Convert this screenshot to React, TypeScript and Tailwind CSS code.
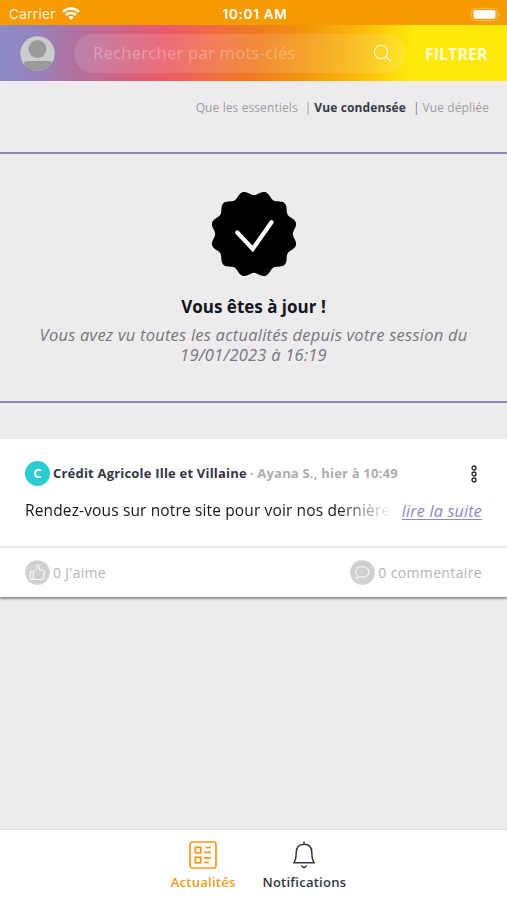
import React from "react";

const sealPath =
  Array.from({ length: 180 }, (_, i) => {
    const a = (i * 2 * Math.PI) / 180;
    const r = 41.1 - 2.3 * Math.cos(12 * a);
    return `${i ? "L" : "M"}${(44 + r * Math.cos(a)).toFixed(2)} ${(44 + r * Math.sin(a)).toFixed(2)}`;
  }).join("") + "Z";

function StatusBar() {
  return (
    <div className="grid h-[25px] grid-cols-3 items-center bg-[#f59a00] pt-[3px] pr-[6px] pl-[9px] font-['Inter',sans-serif] text-white">
      <div className="flex items-center gap-[6px]">
        <span className="text-[13.5px] tracking-[0.35px] text-[#fff3df]">Carrier</span>
        <svg width="18" height="14" viewBox="0 0 18 14" fill="none" stroke="#fff" strokeWidth="2.5">
          <path d="M1 4.8C5.5.5 12.5.5 17 4.8" />
          <path d="M4 8C6.8 5.3 11.2 5.3 14 8" />
          <path d="M6.3 10.2C8 8.7 10 8.7 11.7 10.2L9 13Z" fill="#fff" stroke="none" />
        </svg>
      </div>
      <span className="pt-px text-center text-[13.5px] font-semibold tracking-[0.7px] whitespace-nowrap">10:01 AM</span>
      <svg className="justify-self-end" width="30" height="15" viewBox="0 0 30 15">
        <rect x=".8" y="1.3" width="25.4" height="12.2" rx="3.5" fill="none" stroke="#f9bd5e" />
        <rect x="2.5" y="3" width="22" height="8.8" rx="2" fill="#fff" />
        <path d="M27.5 5.2c2 .8 2 3.6 0 4.4z" fill="#f9bd5e" />
      </svg>
    </div>
  );
}

function Header() {
  return (
    <header className="flex h-14 items-center bg-[linear-gradient(95deg,#8d8bc8_0px,#9484bf_32px,#b0719f_78px,#d06486_122px,#ec5a66_170px,#f06f40_218px,#f07a20_256px,#f3960f_306px,#f9b80a_357px,#ffe80a_412px,#ffe90a_510px)] pl-[20px]">
      <svg width="35" height="35" viewBox="0 0 35 35">
        <defs>
          <clipPath id="avatar">
            <circle cx="17.5" cy="17.5" r="17.3" />
          </clipPath>
        </defs>
        <g clipPath="url(#avatar)">
          <rect width="35" height="35" fill="#cbcccb" />
          <circle cx="17.5" cy="13" r="9" fill="#999b9b" />
          <path d="M4 35V28q0-3 3-3H29q3 0 3 3v7z" fill="#999b9b" />
        </g>
      </svg>
      <div className="ml-[19px] flex h-[39px] w-[332px] items-center justify-between rounded-full bg-white/12 pr-[14px] pl-[19px]">
        <span className="text-[16.5px] tracking-[0.3px] whitespace-nowrap text-white/30">Rechercher par mots-clés</span>
        <svg width="19" height="19" viewBox="0 0 19 19" fill="none" stroke="#fff3c8" strokeWidth="1.3" strokeLinecap="round">
          <circle cx="8" cy="8" r="6.6" />
          <path d="M12.8 12.8L17.5 17.2" />
        </svg>
      </div>
      <span className="ml-[19px] pt-px text-[16px] font-bold text-[#fffbd8]">FILTRER</span>
    </header>
  );
}

function Seal() {
  return (
    <svg width="88" height="88" viewBox="0 0 88 88">
      <path d={sealPath} fill="#000" />
      <path d="M27.3 42.5L42.7 59L61.5 32.3" fill="none" stroke="#fff" strokeWidth="4.2" strokeLinecap="round" />
    </svg>
  );
}

function PostCard() {
  return (
    <article className="mt-9 h-[158px] bg-white shadow-[0_2px_2px_#8d8d90]">
      <div className="flex h-[107px] flex-col px-[25px] pt-[22px]">
        <div className="flex h-[25px] items-center text-[13px] font-bold whitespace-nowrap">
          <span className="flex size-[25px] items-center justify-center rounded-full bg-[#2bcbd4] text-[13px] text-white">C</span>
          <span className="ml-[3px] tracking-[0.2px] text-[#343545]">Crédit Agricole Ille et Villaine</span>
          <span className="ml-[3px] tracking-[0.2px] text-[#adadb0]">· Ayana S., hier à 10:49</span>
          <svg className="mr-[4px] ml-auto" width="8" height="20" viewBox="0 0 8 20" fill="none" stroke="#222" strokeWidth="1.3">
            <circle cx="4" cy="4" r="2" />
            <circle cx="4" cy="10" r="2" />
            <circle cx="4" cy="16" r="2" />
          </svg>
        </div>
        <div className="mt-[13px] flex h-6 items-center text-[15.5px] whitespace-nowrap">
          <span className="bg-[linear-gradient(90deg,#171719_312px,#ffffff_366px)] bg-clip-text tracking-[0.14px] text-transparent">
            Rendez-vous sur notre site pour voir nos dernière
          </span>
          <a className="ml-auto text-[16px] tracking-[0.24px] text-[#9287c8] italic underline underline-offset-2">lire la suite</a>
        </div>
      </div>
      <div className="flex h-[51px] items-center justify-between border-t-2 border-[#e7e7e8] px-[25px] text-[14px] text-[#b5b5b7]">
        <div className="flex items-center gap-[3px]">
          <svg width="25" height="25" viewBox="0 0 25 25" fill="none" stroke="#fff" strokeWidth="1" strokeLinejoin="round">
            <circle cx="12.5" cy="12.5" r="12.3" fill="#d0d0d1" stroke="none" />
            <path d="M5.3 11.5h3v8h-3zM8.300 12L12 8.300V5.500q0-1 1.300-1 2 1 1.200 5.500H18q1.800.2 1.500 2l-1.200 6q-.4 1.500-2 1.500H11q-1.500 0-2.700-1" />
          </svg>
          <span className="tracking-[0.3px]">0 J'aime</span>
        </div>
        <div className="flex items-center gap-[3px]">
          <svg width="25" height="25" viewBox="0 0 25 25" fill="none" stroke="#fff" strokeWidth="1" strokeLinejoin="round">
            <circle cx="12.5" cy="12.5" r="12.3" fill="#d0d0d1" stroke="none" />
            <path d="M8 16C5 14 4.500 10 8 7.800c4-2.400 10-.8 10.800 3.500.6 4-4.300 6.700-9 5.500L6.500 18.500z" />
          </svg>
          <span className="tracking-[0.36px]">0 commentaire</span>
        </div>
      </div>
    </article>
  );
}

function TabBar() {
  return (
    <nav className="flex h-[71px] justify-center gap-[27px] border-t border-[#dedee0] bg-white pl-[10px] text-[13px] font-semibold tracking-[0.25px]">
      <div className="flex flex-col items-center pt-[10px] text-[#f39a18]">
        <svg width="30" height="30" viewBox="0 0 30 30" fill="none" stroke="currentColor" strokeWidth="1.7">
          <rect x="2" y="2" width="26" height="26" rx="2.5" />
          <rect x="7.3" y="7.3" width="5.5" height="5.5" />
          <rect x="7.3" y="17.3" width="5.5" height="5.5" />
          <path d="M17.5 7.5H23M16 12.3h7M16 17.8h7M16 22.5h5" />
        </svg>
        <span className="mt-[2px] leading-[20px]">Actualités</span>
      </div>
      <div className="flex flex-col items-center pt-[10px] text-[#343641]">
        <svg width="30" height="30" viewBox="0 0 30 30" fill="none" stroke="currentColor" strokeWidth="1.5" strokeLinejoin="round" strokeLinecap="round">
          <path d="M15 2V4M15 4.200c5.200 0 7.800 3.500 7.800 8.300 0 5 .5 7.500 2.400 10.300H4.800c1.900-2.800 2.400-5.300 2.400-10.300C7.200 7.700 9.800 4.200 15 4.200Z" />
          <path d="M12.800 26q2.200 2.800 4.400 0" />
        </svg>
        <span className="mt-[2px] leading-[20px]">Notifications</span>
      </div>
    </nav>
  );
}

export default function App() {
  return (
    <div className="flex h-[900px] w-[507px] flex-col overflow-hidden bg-[#edebee] font-['Open_Sans',sans-serif]">
      <StatusBar />
      <Header />
      <div className="flex h-[71px] justify-end pt-[17px] pr-[18px] text-[12px] leading-[20px] whitespace-nowrap text-[#9e9ea2]">
        <span className="tracking-[0.1px]">Que les essentiels</span>
        <span className="ml-[7px]">|</span>
        <span className="ml-[3px] font-bold tracking-[0.12px] text-[#383a47]">Vue condensée</span>
        <span className="ml-[7px] text-[#77777f]">|</span>
        <span className="ml-[3px] tracking-[0.1px]">Vue dépliée</span>
      </div>
      <section className="flex h-[251px] flex-col items-center border-y-2 border-[#8d83bf] pt-[36px] text-center">
        <Seal />
        <h1 className="mt-[17px] text-[17px] leading-[24px] font-bold text-[#15151c]">Vous êtes à jour !</h1>
        <p className="mt-[6px] w-[440px] text-[16.5px] leading-[19.500px] tracking-[0.23px] text-[#77777b] italic">
          Vous avez vu toutes les actualités depuis votre session du 19/01/2023 à 16:19
        </p>
      </section>
      <PostCard />
      <div className="flex-1" />
      <TabBar />
    </div>
  );
}
